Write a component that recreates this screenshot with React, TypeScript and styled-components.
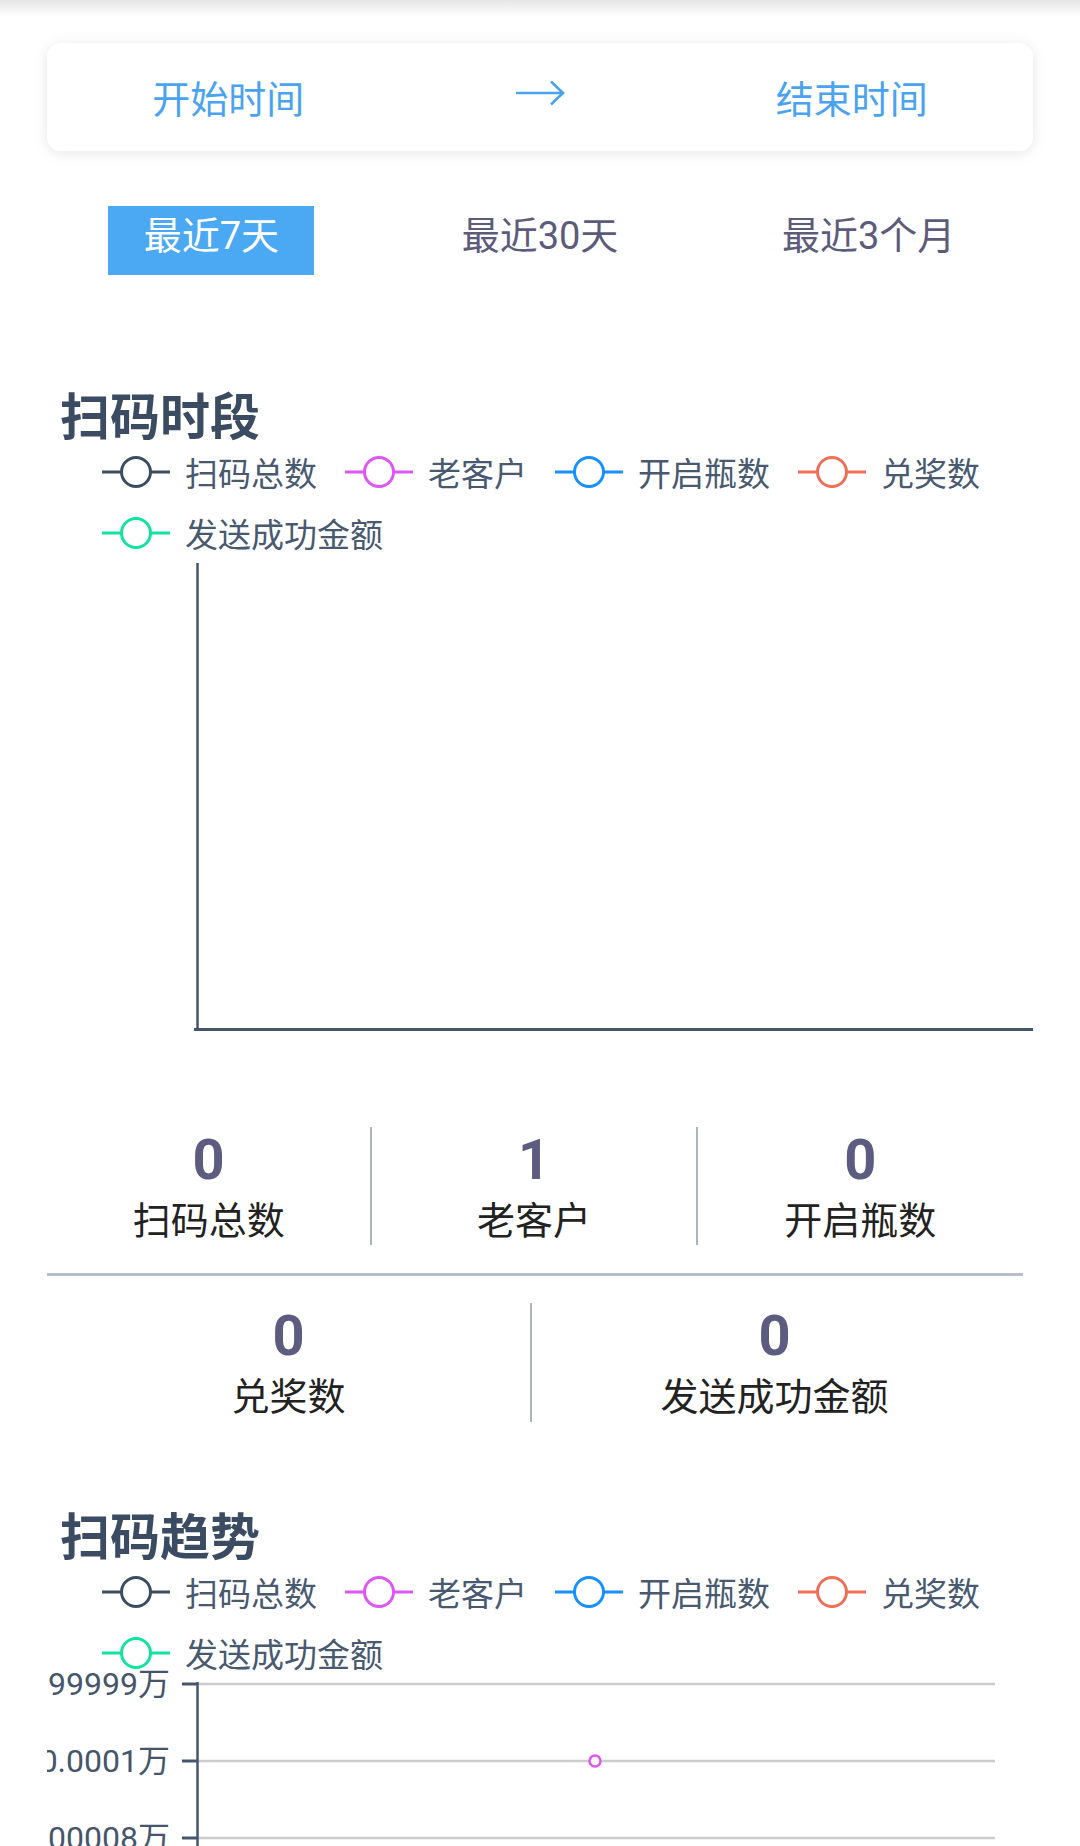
import React, { FC } from 'react'
import styled, { createGlobalStyle } from 'styled-components'

const GlobalStyle = createGlobalStyle`
  body {
    margin: 0;
    background: #fff;
    font-family: Roboto, 'Noto Sans CJK SC', sans-serif;
    overflow: hidden;
  }
`

const Page = styled.div`
  position: relative;
  width: 1080px;
  height: 1846px;
  overflow: hidden;
  padding-top: 43px;
  box-sizing: border-box;

  &::before {
    content: '';
    position: absolute;
    top: 0;
    left: 0;
    right: 0;
    height: 16px;
    background: linear-gradient(#e4e4e4, rgba(255, 255, 255, 0));
  }
`

const DateCard = styled.div`
  margin: 0 47px;
  height: 108px;
  box-sizing: border-box;
  padding-top: 6px;
  border-radius: 14px;
  background: #fff;
  box-shadow: 0 2px 14px rgba(0, 0, 0, 0.1);
  display: flex;
  justify-content: space-around;
  align-items: center;
`

const DateText = styled.span`
  color: #4aa3f0;
  font-size: 38px;
  line-height: 1;
`

const ArrowIcon = styled.svg`
  display: block;
  margin-bottom: 14px;
`

const TabRow = styled.div`
  margin: 55px 47px 0;
  display: grid;
  grid-template-columns: repeat(3, 1fr);
  justify-items: center;
`

const Tab = styled.div<{ $active?: boolean }>`
  width: 206px;
  height: 69px;
  line-height: 61px;
  text-align: center;
  font-size: 38px;
  color: ${({ $active }) => ($active ? '#fff' : '#5c5c7a')};
  background: ${({ $active }) => ($active ? '#4ba8f3' : 'transparent')};
`

const Section = styled.section<{ $top: number }>`
  margin: ${({ $top }) => $top}px 47px 0;
`

const SectionTitle = styled.h2`
  margin: 0;
  padding-left: 13px;
  font-size: 50px;
  line-height: 60px;
  font-weight: 700;
  color: #3b4c62;
`

const Legend = styled.div`
  margin-top: 4px;
  padding-left: 55px;
  display: flex;
  flex-wrap: wrap;
  column-gap: 28px;
  row-gap: 21px;
`

const LegendItem = styled.div`
  display: flex;
  align-items: center;
  gap: 15px;
  height: 40px;
  font-size: 33px;
  color: #485970;
`

const ChartSvg = styled.svg<{ $shift?: number }>`
  display: block;
  overflow: visible;
  margin-top: ${({ $shift = 0 }) => -$shift}px;
`

const Stats = styled.div`
  margin: 94px 57px 0 47px;
`

const StatRow = styled.div<{ $cols: number; $inset?: number }>`
  display: grid;
  grid-template-columns: repeat(${({ $cols }) => $cols}, 1fr);
  margin-right: ${({ $inset = 0 }) => $inset}px;
`

const StatCell = styled.div<{ $height: number }>`
  height: ${({ $height }) => $height}px;
  padding-top: 3px;
  box-sizing: border-box;
  text-align: center;
  border-right: 2px solid #aab4c0;

  &:last-child {
    border-right: none;
  }
`

const StatNumber = styled.div`
  font-size: 56px;
  line-height: 60px;
  font-weight: 700;
  color: #5b5c80;
`

const StatLabel = styled.div`
  margin-top: 5px;
  font-size: 38px;
  line-height: 52px;
  color: #222;
`

const Separator = styled.div`
  height: 3px;
  background: #b6bec8;
  margin: 28px 0 27px;
`

const series = [
  { name: '扫码总数', color: '#3c4d63' },
  { name: '老客户', color: '#e055f5' },
  { name: '开启瓶数', color: '#1890ff' },
  { name: '兑奖数', color: '#ef6f57' },
  { name: '发送成功金额', color: '#12e3a0' }
]

const LegendIcon: FC<{ color: string }> = ({ color }) => (
  <svg width="68" height="32" viewBox="0 0 68 32">
    <line x1="0" y1="16" x2="68" y2="16" stroke={color} strokeWidth="3" />
    <circle cx="34" cy="16" r="14.5" fill="#fff" stroke={color} strokeWidth="3" />
  </svg>
)

const ChartLegend: FC = () => (
  <Legend>
    {series.map(({ name, color }) => (
      <LegendItem key={name}>
        <LegendIcon color={color} />
        {name}
      </LegendItem>
    ))}
  </Legend>
)

const axisColor = '#45566c'

// the chart's canvas starts at the page margin, so long labels are clipped on the left
const yLabels = [
  { y: 23, text: '0.00011999999999999999万' },
  { y: 100, text: '0.0001万' },
  { y: 177, text: '0.00008万' }
]

const firstRow = [
  { value: 0, label: '扫码总数' },
  { value: 1, label: '老客户' },
  { value: 0, label: '开启瓶数' }
]

const secondRow = [
  { value: 0, label: '兑奖数' },
  { value: 0, label: '发送成功金额' }
]

export default function App() {
  return (
    <Page>
      <GlobalStyle />
      <DateCard>
        <DateText>开始时间</DateText>
        <ArrowIcon width="50" height="26" viewBox="0 0 50 26">
          <path
            d="M1 13 H48 M36 1.5 L48 13 L36 24.5"
            fill="none"
            stroke="#4aa3f0"
            strokeWidth="2.6"
          />
        </ArrowIcon>
        <DateText>结束时间</DateText>
      </DateCard>

      <TabRow>
        <Tab $active>最近7天</Tab>
        <Tab>最近30天</Tab>
        <Tab>最近3个月</Tab>
      </TabRow>

      <Section $top={113}>
        <SectionTitle>扫码时段</SectionTitle>
        <ChartLegend />
        <ChartSvg width="986" height="480" viewBox="0 0 986 480">
          <line x1="150.5" y1="10" x2="150.5" y2="477" stroke={axisColor} strokeWidth="2.5" />
          <line x1="147" y1="476.5" x2="986" y2="476.5" stroke={axisColor} strokeWidth="3" />
        </ChartSvg>
      </Section>

      <Stats>
        <StatRow $cols={3}>
          {firstRow.map(({ value, label }) => (
            <StatCell key={label} $height={118}>
              <StatNumber>{value}</StatNumber>
              <StatLabel>{label}</StatLabel>
            </StatCell>
          ))}
        </StatRow>
        <Separator />
        <StatRow $cols={2} $inset={6}>
          {secondRow.map(({ value, label }) => (
            <StatCell key={label} $height={119}>
              <StatNumber>{value}</StatNumber>
              <StatLabel>{label}</StatLabel>
            </StatCell>
          ))}
        </StatRow>
      </Stats>

      <Section $top={86}>
        <SectionTitle>扫码趋势</SectionTitle>
        <ChartLegend />
        <ChartSvg width="986" height="260" viewBox="0 0 986 260" $shift={12}>
          <defs>
            <clipPath id="trend-canvas">
              <rect x="0" y="0" width="986" height="260" />
            </clipPath>
          </defs>
          <g clipPath="url(#trend-canvas)">
            {yLabels.map(({ y, text }) => (
              <g key={text}>
                <line x1="150" y1={y} x2="948" y2={y} stroke="#cccccc" strokeWidth="2.5" />
                <line x1="135" y1={y} x2="150" y2={y} stroke={axisColor} strokeWidth="3" />
                <text
                  x="123"
                  y={y + 11}
                  textAnchor="end"
                  fontSize="32"
                  fill="#45566c"
                  fontFamily="Roboto, 'Noto Sans CJK SC', sans-serif"
                >
                  {text}
                </text>
              </g>
            ))}
            <line x1="150.5" y1="21" x2="150.5" y2="260" stroke={axisColor} strokeWidth="2.5" />
            <circle cx="548" cy="100" r="5.5" fill="#fff" stroke="#e055f5" strokeWidth="2.5" />
          </g>
        </ChartSvg>
      </Section>
    </Page>
  )
}
